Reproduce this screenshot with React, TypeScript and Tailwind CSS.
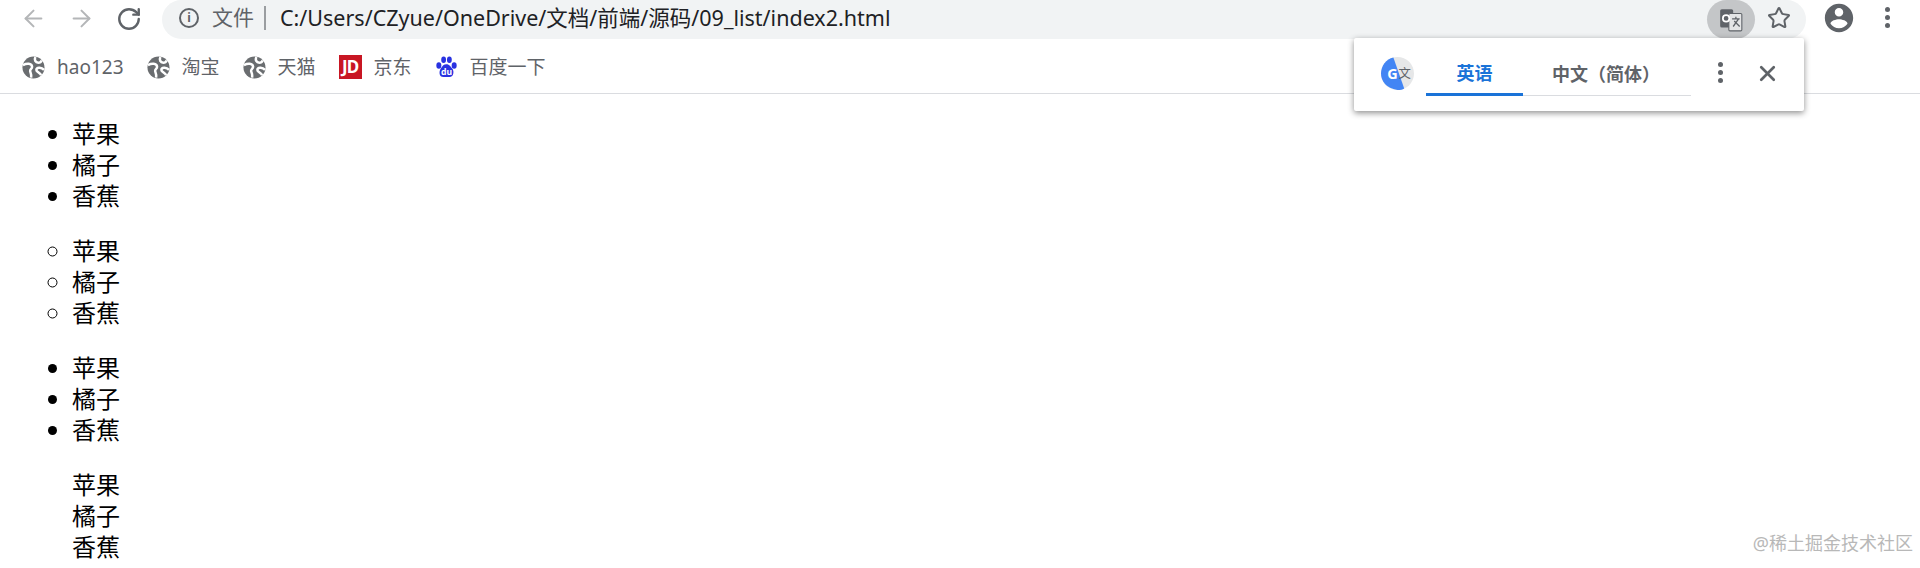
import { ArrowLeft, ArrowRight, RotateCw, Star, X } from "lucide-react";

const fruits = ["苹果", "橘子", "香蕉"];

function Globe() {
  return (
    <svg viewBox="0 0 24 24" className="h-[23px] w-[23px]">
      <circle cx="12" cy="12" r="11.500" fill="#6a6d70" />
      <path
        d="M1 9.500C5 7.500 10 7.500 10.500 11c.3 2.500-2.500 2.500-2 5 .3 1.500 1.500 2 1 6.500M14 1c-1.500 3 0 6 3 6 1.500 0 3-1 3.500-2.500M23 14.500c-3-3.500-8-2.500-8 0 0 2 3.500 2.500 5 5.500"
        fill="none"
        stroke="#fff"
        strokeWidth="2.600"
      />
    </svg>
  );
}

function Bookmark({ icon, label }: { icon: React.ReactNode; label: string }) {
  return (
    <div className="flex items-center gap-[12px]">
      <span className="flex w-[23px] justify-center">{icon}</span>
      <span className="text-[19px] text-[#5f6368]">{label}</span>
    </div>
  );
}

function FruitList({ marker }: { marker: string }) {
  return (
    <ul className={`${marker} pl-[72px] text-[24px] leading-[31px] text-black`}>
      {fruits.map((f) => (
        <li key={f}>{f}</li>
      ))}
    </ul>
  );
}

function Dots() {
  return (
    <div className="flex flex-col gap-[3px]">
      <span className="h-[5px] w-[5px] rounded-full bg-[#5f6368]" />
      <span className="h-[5px] w-[5px] rounded-full bg-[#5f6368]" />
      <span className="h-[5px] w-[5px] rounded-full bg-[#5f6368]" />
    </div>
  );
}

export default function App() {
  return (
    <div
      className="relative h-[568px] w-full overflow-hidden bg-white"
      style={{ fontFamily: '"Noto Sans", "Noto Sans CJK SC", sans-serif' }}
    >
      {/* Toolbar */}
      <div className="flex h-[39px] items-start">
        <div className="flex w-[162px] items-center pt-[5px] pl-[20px] text-[#b4b6b8]">
          <ArrowLeft size={27} strokeWidth={1.8} />
          <ArrowRight size={27} strokeWidth={1.8} className="ml-[21px]" />
          <RotateCw size={26} strokeWidth={2.2} className="ml-[21px] text-[#5f6368]" />
        </div>
        <div className="flex h-[39px] w-[1644px] items-center rounded-full bg-[#f1f3f4] pl-[17px]">
          <span className="mb-[3px] flex h-[20px] w-[20px] items-center justify-center rounded-full border-2 border-[#5f6368] text-[12px] font-bold text-[#5f6368]">
            i
          </span>
          <span className="mb-[3px] ml-[13px] text-[21px] text-[#5f6368]">文件</span>
          <span className="mb-[3px] ml-[10px] mr-[14px] h-[24px] w-[2px] bg-[#9a9da0]" />
          <span className="mb-[3px] text-[21.5px] text-[#202124]">C:/Users/CZyue/OneDrive/文档/前端/源码/09_list/index2.html</span>
          <div className="ml-auto flex items-center">
            <span className="flex h-[39px] w-[48px] items-center justify-center rounded-full bg-[#c4c6c8]">
              <svg viewBox="0 0 24 24" className="h-[26px] w-[26px]">
                <rect x="2" y="2" width="12" height="17" rx="1.500" fill="#5f6368" />
                <rect x="10" y="6" width="12" height="16" rx="1" fill="#e4e5e6" stroke="#5f6368" />
                <circle cx="7.500" cy="10.500" r="3" fill="none" stroke="#fff" strokeWidth="1.600" />
                <path d="M13 11h7M16.500 9v2M14 18l5-7M15 13l5 5" stroke="#5f6368" strokeWidth="1.200" fill="none" />
              </svg>
            </span>
            <Star size={24} strokeWidth={2} className="ml-[12px] mr-[15px] mb-[3px] text-[#5f6368]" />
          </div>
        </div>
        <svg viewBox="0 0 24 24" className="ml-[16px] mt-[1px] h-[34px] w-[34px]">
          <path
            fill="#5f6368"
            d="M12 2C6.480 2 2 6.480 2 12s4.480 10 10 10 10-4.480 10-10S17.520 2 12 2zm0 3c1.660 0 3 1.340 3 3s-1.340 3-3 3-3-1.340-3-3 1.340-3 3-3zm0 14.200c-2.500 0-4.710-1.280-6-3.220.030-1.990 4-3.080 6-3.080s5.970 1.090 6 3.080c-1.290 1.940-3.500 3.220-6 3.220z"
          />
        </svg>
        <div className="ml-[29px] mt-[7px]">
          <Dots />
        </div>
      </div>

      {/* Bookmarks bar */}
      <div className="flex h-[55px] items-center gap-[23px] border-b border-[#dadce0] pt-[2px] pl-[22px]">
        <Bookmark icon={<Globe />} label="hao123" />
        <Bookmark icon={<Globe />} label="淘宝" />
        <Bookmark icon={<Globe />} label="天猫" />
        <Bookmark
          icon={
            <span className="flex h-[24px] w-[24px] items-center justify-center bg-[#c81623] text-[17px] font-bold tracking-[-1px] text-white">
              JD
            </span>
          }
          label="京东"
        />
        <Bookmark
          icon={
            <svg viewBox="0 0 24 24" className="h-[25px] w-[23px]" fill="#2932e1">
              <ellipse cx="4" cy="10" rx="2.600" ry="3.400" />
              <ellipse cx="9" cy="4" rx="2.500" ry="3.400" />
              <ellipse cx="15" cy="4" rx="2.500" ry="3.400" />
              <ellipse cx="20" cy="10" rx="2.600" ry="3.400" />
              <path d="M12 8.500c3 0 4 2.500 6 4.500s2 9-3 9H9c-5 0-5-6-3-9s3-4.500 6-4.500z" />
              <text x="12" y="20" textAnchor="middle" fontSize="9" fontWeight="700" fill="#fff">du</text>
            </svg>
          }
          label="百度一下"
        />
      </div>

      {/* Page content */}
      <div className="flex flex-col gap-[24px] pt-[24px]">
        <FruitList marker="list-disc" />
        <FruitList marker="list-[circle]" />
        <FruitList marker="list-disc" />
        <FruitList marker="list-none" />
      </div>

      {/* Translate popup */}
      <div className="absolute left-[1354px] top-[38px] flex h-[73px] w-[450px] items-start rounded-[2px] bg-white shadow-[0_2px_6px_rgba(0,0,0,0.45)]">
        <svg viewBox="0 0 32 32" className="ml-[27px] mt-[19px] h-[33px] w-[33px]">
          <circle cx="16" cy="16" r="16" fill="#e6e7e8" />
          <path d="M12 0.500C5 2 0 8.500 0 16s5 14 16 16c3 0 5-.5 6.500-1.500z" fill="#4285f4" />
          <text x="6" y="21" fontSize="14" fontWeight="700" fill="#fff">G</text>
          <text x="17" y="20" fontSize="12" fill="#5f6368">文</text>
        </svg>
        <div className="ml-[12px] flex h-[58px] w-[265px] border-b border-[#dadce0]">
          <div className="-mb-px flex w-[97px] items-center justify-center border-b-[3px] border-[#1a73d8] pt-[16px] text-[18px] font-bold text-[#1a73d8]">
            英语
          </div>
          <div className="flex flex-1 items-center pl-[29px] pt-[15px] text-[18px] font-bold text-[#5f6368]">
            中文（简体）
          </div>
        </div>
        <div className="ml-[27px] mt-[24px]">
          <Dots />
        </div>
        <X size={25} strokeWidth={2.600} className="ml-[32px] mt-[23px] text-[#5f6368]" />
      </div>

      {/* Watermark */}
      <span className="absolute bottom-[11px] right-[7px] text-[18px] text-[#b8b8b8]">@稀土掘金技术社区</span>
    </div>
  );
}
